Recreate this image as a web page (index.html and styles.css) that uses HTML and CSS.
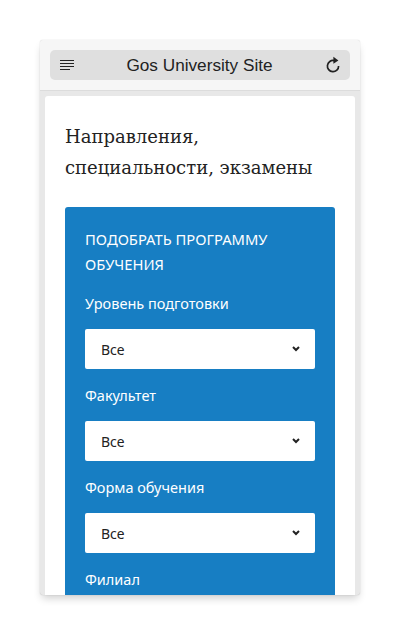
FILE: index.html
```html
<!DOCTYPE html>
<html lang="ru">
<head>
<meta charset="utf-8">
<title>Gos University Site</title>
<link rel="stylesheet" href="styles.css">
</head>
<body>
<div class="phone">
  <header class="toolbar">
    <div class="address">
      <svg class="icon-menu" width="14" height="10" viewBox="0 0 14 10"><path d="M0 .5h14M0 3.5h14M0 6.5h14M0 9.5h10" stroke="#222" stroke-width="1" fill="none"/></svg>
      <span class="site">Gos University Site</span>
      <svg class="icon-reload" width="16" height="18" viewBox="0 0 16 18"><path d="M9.2 4.6A5.6 5.6 0 1 0 13.6 10" stroke="#222" stroke-width="1.7" fill="none"/><path d="M8.4 .8l5 3.6-5 3.4z" fill="#222"/></svg>
    </div>
  </header>
  <main class="viewport">
    <div class="content">
      <h1 class="title">Направления, специальности, экзамены</h1>
      <section class="filter">
        <h2 class="filter-title">ПОДОБРАТЬ ПРОГРАММУ ОБУЧЕНИЯ</h2>
        <div class="label">Уровень подготовки</div>
        <div class="select"><span>Все</span><svg width="8" height="6" viewBox="0 0 8 6"><path d="M1 1l3 3 3-3" stroke="#222" stroke-width="2" fill="none"/></svg></div>
        <div class="label">Факультет</div>
        <div class="select"><span>Все</span><svg width="8" height="6" viewBox="0 0 8 6"><path d="M1 1l3 3 3-3" stroke="#222" stroke-width="2" fill="none"/></svg></div>
        <div class="label">Форма обучения</div>
        <div class="select"><span>Все</span><svg width="8" height="6" viewBox="0 0 8 6"><path d="M1 1l3 3 3-3" stroke="#222" stroke-width="2" fill="none"/></svg></div>
        <div class="label">Филиал</div>
      </section>
    </div>
  </main>
</div>
</body>
</html>
```
FILE: styles.css
```css
* { box-sizing: border-box; }
html, body { margin: 0; height: 635px; overflow: hidden; background: #fff; }
body { padding: 40px; font-family: "Noto Sans", "Open Sans", sans-serif; }
.phone {
  width: 320px;
  height: 555px;
  display: flex;
  flex-direction: column;
  overflow: hidden;
  border-radius: 3px;
  background: #e8e8e8;
  box-shadow: 0 0 1px rgba(0,0,0,.25), 0 5px 9px -2px rgba(0,0,0,.2);
}
.toolbar {
  height: 51px;
  flex: none;
  padding: 10px;
  background: #f6f6f6;
  border-bottom: 1px solid #dcdcdc;
}
.address {
  height: 30px;
  display: flex;
  align-items: center;
  justify-content: space-between;
  padding: 0 9px 0 10px;
  border-radius: 5px;
  background: #dfdfdf;
}
.site {
  font-family: "Liberation Sans", Arial, sans-serif;
  font-size: 17.2px;
  color: #222;
}
.viewport { flex: 1; min-height: 0; padding: 5px 5px 0; }
.content {
  height: 100%;
  overflow: hidden;
  padding: 25px 20px 0;
  border-radius: 3px 3px 0 0;
  background: #fff;
}
.title {
  margin: 0 0 24px;
  font-family: "DejaVu Serif", "Liberation Serif", serif;
  font-size: 18px;
  font-weight: 400;
  line-height: 31px;
  color: #222;
}
.filter {
  padding: 20px 20px 40px;
  border-radius: 3px 3px 0 0;
  background: #177ec3;
  color: #fff;
}
.filter-title {
  margin: 0 0 16px;
  font-size: 14.75px;
  font-weight: 400;
  line-height: 25px;
}
.label {
  font-size: 14.5px;
  line-height: 20px;
  margin-bottom: 16px;
}
.select {
  height: 40px;
  display: flex;
  align-items: center;
  justify-content: space-between;
  padding: 0 15px 0 16px;
  margin-bottom: 16px;
  border-radius: 2px;
  background: #fff;
  color: #222;
  font-size: 14px;
}
```
